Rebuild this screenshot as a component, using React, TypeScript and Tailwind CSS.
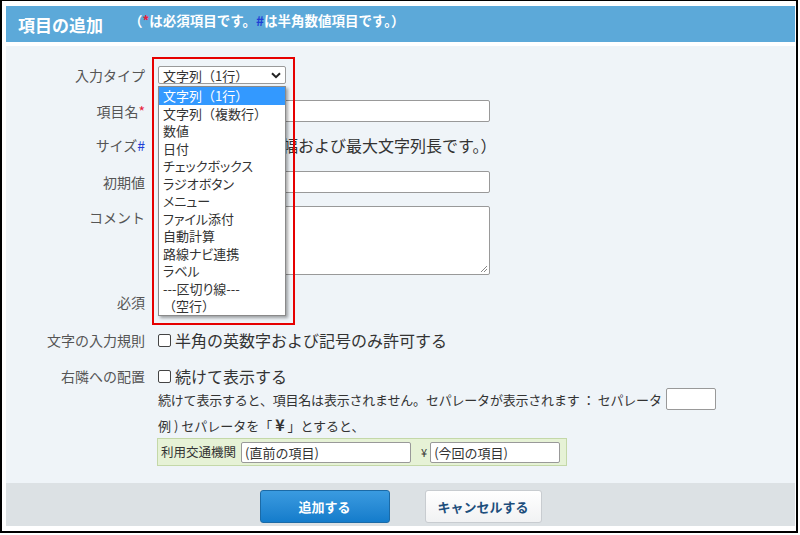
import React from "react";

const items = [
  "文字列（1行）",
  "文字列（複数行）",
  "数値",
  "日付",
  "チェックボックス",
  "ラジオボタン",
  "メニュー",
  "ファイル添付",
  "自動計算",
  "路線ナビ連携",
  "ラベル",
  "---区切り線---",
  "（空行）",
];

function Item({ text }: { text: string }) {
  const parts = text.split(/([（）])/).filter((p) => p !== "");
  return (
    <>
      {parts.map((p, i) =>
        p === "（" || p === "）" ? (
          <span key={i} className="[font-feature-settings:normal]">
            {p}
          </span>
        ) : (
          <span key={i}>{p}</span>
        )
      )}
    </>
  );
}

function Row({
  label,
  children,
  className = "",
  top = false,
}: {
  label: React.ReactNode;
  children?: React.ReactNode;
  className?: string;
  top?: boolean;
}) {
  return (
    <div className={`flex ${className}`}>
      <div className="w-[139px] shrink-0 text-right text-[14px] text-[#555] leading-[22px]">{label}</div>
      <div className={`ml-[13px] flex ${top ? "items-start" : "items-center"}`}>{children}</div>
    </div>
  );
}

function Box() {
  return <span className="inline-block w-[13px] h-[13px] border border-[#444] rounded-[2px] bg-white mr-[4px] shrink-0" />;
}

export default function App() {
  return (
    <div className="w-[800px] h-[535px] bg-white font-['Noto_Sans_CJK_JP','Noto_Sans',sans-serif]">
      <div className="w-[798px] h-[533px] border-t border-l-2 border-r-2 border-b-2 border-black pt-[5px] pl-[4px] pr-[1px] pb-[5px] flex flex-col">
        {/* header */}
        <div className="h-[36px] bg-[#5ca9d9] flex items-center pl-[12px] shrink-0">
          <span className="text-white font-bold text-[17px] leading-none">項目の追加</span>
          <span className="ml-[26px] text-white font-bold text-[13.5px] leading-none -mt-[6px] whitespace-nowrap">
            （<span className="text-[#e8203a]">*</span>は必須項目です。<span className="text-[#1f3fd6]">#</span>は半角数値項目です。）
          </span>
        </div>
        {/* form */}
        <div className="relative mt-[4px] h-[437px] bg-[#eff4f8] pt-[18px] shrink-0 text-[#333]">
          <Row label="入力タイプ" className="h-[22px]">
            <div className="w-[128px] h-[18px] bg-white border border-[#9a9a9a] rounded-[2px] flex items-center justify-between pl-[4px] pr-[4px] text-[13px] leading-none">
              <span>文字列（1行）</span>
              <svg width="10" height="7" viewBox="0 0 10 7">
                <path d="M1 1.2 L5 5.2 L9 1.2" stroke="#222" strokeWidth="2" fill="none" />
              </svg>
            </div>
          </Row>
          <Row
            label={
              <>
                項目名<span className="text-[#e8203a]">*</span>
              </>
            }
            className="h-[22px] mt-[14px]"
          >
            <div className="w-[332px] h-[22px] bg-white border border-[#999] rounded-[2px]" />
          </Row>
          <Row
            label={
              <>
                サイズ<span className="text-[#1f3fd6]">#</span>
              </>
            }
            className="h-[22px] mt-[12px]"
          >
            <div className="w-[72px] h-[22px] bg-white border border-[#999] rounded-[2px] mr-[4px]" />
            <span className="text-[16px] leading-none whitespace-nowrap">（表示幅および最大文字列長です。）</span>
          </Row>
          <Row label="初期値" className="h-[22px] mt-[15px]">
            <div className="w-[332px] h-[22px] bg-white border border-[#999] rounded-[2px]" />
          </Row>
          <Row label="コメント" className="h-[69px] mt-[13px]" top>
            <div className="relative w-[332px] h-[69px] bg-white border border-[#999] rounded-[2px]">
              <svg className="absolute right-[1px] bottom-[1px]" width="8" height="8" viewBox="0 0 8 8">
                <path d="M7 1 L1 7 M7 4 L4 7" stroke="#888" strokeWidth="1" />
              </svg>
            </div>
          </Row>
          <Row label="必須" className="h-[22px] mt-[16px]">
            <Box />
          </Row>
          <Row label="文字の入力規則" className="h-[22px] mt-[16px]">
            <Box />
            <span className="text-[16px] leading-none whitespace-nowrap">半角の英数字および記号のみ許可する</span>
          </Row>
          <Row label="右隣への配置" className="h-[22px] mt-[14px]">
            <Box />
            <span className="text-[16px] leading-none whitespace-nowrap">続けて表示する</span>
          </Row>
          <Row label="" className="h-[22px] mt-[1px]">
            <span className="text-[13px] leading-none whitespace-nowrap tracking-[-0.2px]">
              続けて表示すると、項目名は表示されません。セパレータが表示されます ： セパレータ
            </span>
            <div className="ml-[4px] w-[50px] h-[22px] bg-white border border-[#999] rounded-[2px]" />
          </Row>
          <Row label="" className="h-[22px] mt-[3px]">
            <span className="text-[13px] leading-none whitespace-nowrap">
              例 ) セパレータを「 <span className="font-bold text-[16px]">¥</span> 」とすると、
            </span>
          </Row>
          <Row label="" className="h-[28px] mt-[3px]">
            <div className="-ml-px w-[410px] h-[28px] bg-[#e6f2d6] border border-[#c4d8a8] flex items-center pl-[3px]">
              <span className="text-[12.5px] leading-none whitespace-nowrap">利用交通機関</span>
              <div className="ml-[5px] w-[170px] h-[21px] bg-white border border-[#999] rounded-[2px] flex items-center pl-[3px] text-[13px] leading-none">
                (直前の項目)
              </div>
              <span className="ml-[10px] text-[11px] leading-none">¥</span>
              <div className="ml-[3px] w-[130px] h-[21px] bg-white border border-[#999] rounded-[2px] flex items-center pl-[3px] text-[13px] leading-none">
                (今回の項目)
              </div>
            </div>
          </Row>

          {/* dropdown list */}
          <div className="absolute left-[152px] top-[40px] w-[128px] h-[230px] bg-white border border-[#8a8a8a] shadow-[2px_2px_3px_rgba(0,0,0,0.35)] [font-feature-settings:'palt']">
            {items.map((it, i) => (
              <div
                key={it}
                className={`h-[17.5px] flex items-center pl-[4px] text-[13px] leading-none whitespace-nowrap ${
                  i === 0 ? "bg-[#3399ff] text-white" : "text-[#333]"
                }`}
              >
                <Item text={it} />
              </div>
            ))}
          </div>
          {/* red highlight */}
          <div className="absolute left-[146px] top-[11px] w-[143px] h-[268px] border-2 border-[#e60000] pointer-events-none" />
        </div>
        {/* footer */}
        <div className="flex-1 bg-[#dce1e4] flex justify-center items-start pt-[7px] gap-[35px]">
          <button className="w-[130px] h-[33px] rounded-[3px] border border-[#1b6aa6] bg-gradient-to-b from-[#3a9be0] to-[#137ccb] text-white font-bold text-[13px]">
            追加する
          </button>
          <button className="w-[117px] h-[33px] rounded-[3px] border border-[#c8ccd0] bg-gradient-to-b from-white to-[#f1f2f3] text-[#1d4e7c] font-bold text-[13px]">
            キャンセルする
          </button>
        </div>
      </div>
    </div>
  );
}
